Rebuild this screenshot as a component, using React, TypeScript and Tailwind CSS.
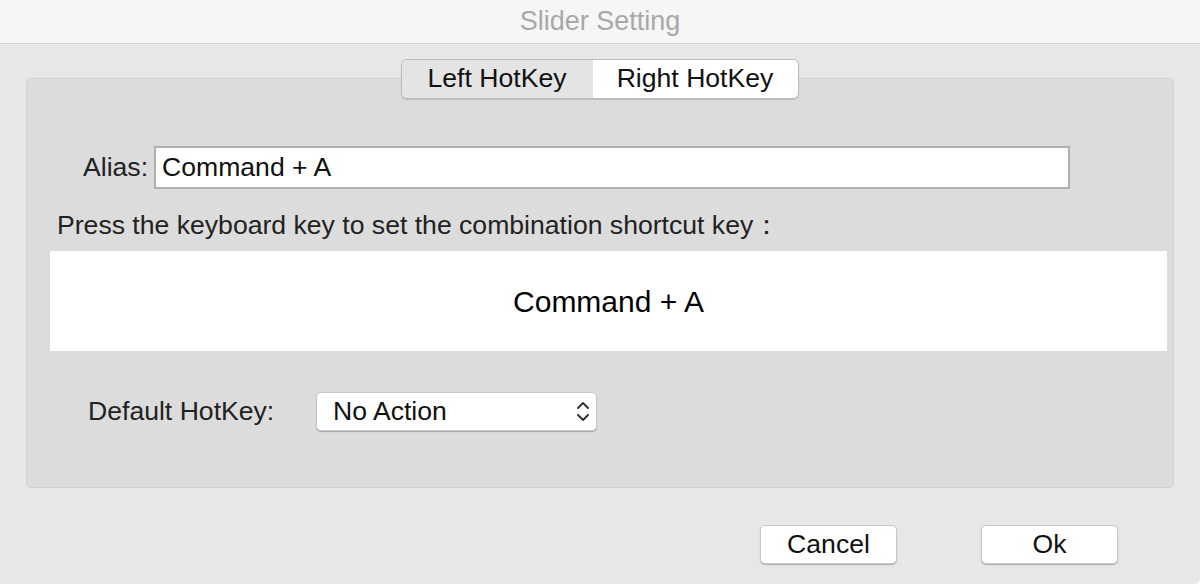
import React from "react";

export default function App() {
  return (
    <div
      className="w-[1200px] h-[584px] bg-[#e7e7e7] flex flex-col overflow-hidden rounded-br-[6px]"
      style={{ fontFamily: '"Liberation Sans", Arial, sans-serif' }}
    >
      <div className="h-[44px] shrink-0 bg-[#f6f6f6] border-b border-[#d3d3d3] flex items-center justify-center">
        <span className="text-[27px] text-[#a8a8a8]">Slider Setting</span>
      </div>
      <div className="relative px-[26px] pt-[34px]">
        <div className="h-[410px] bg-[#dcdcdc] border border-[#d2d2d2] rounded-[5px] flex flex-col pt-[67px] pl-[23px] pr-[6px]">
          <div className="flex items-center pl-[33px] pr-[97px]">
            <span className="text-[26.6px] text-[#222] mr-[6px]">Alias:</span>
            <div className="flex-1 h-[43px] bg-white border-2 border-[#b0b0b0] flex items-center px-[6px]">
              <span className="text-[26.6px] text-[#111]">Command + A</span>
            </div>
          </div>
          <div className="mt-[20px] pl-[7px] text-[26.6px] text-[#222] leading-[32px]">
            Press the keyboard key to set the combination shortcut key：
          </div>
          <div className="mt-[10px] h-[100px] bg-white flex items-center justify-center">
            <span className="text-[30px] text-black">Command + A</span>
          </div>
          <div className="mt-[41px] flex items-center pl-[38px]">
            <span className="text-[26.6px] text-[#222] w-[228px]">Default HotKey:</span>
            <div className="w-[281px] h-[39px] bg-white rounded-[5px] border border-[#c8c8c8] shadow-[0_1px_1px_rgba(0,0,0,0.25)] flex items-center justify-between pl-[16px] pr-[6px]">
              <span className="text-[26.6px] text-[#111]">No Action</span>
              <svg width="14" height="24" viewBox="0 0 14 24" fill="none" stroke="#333" strokeWidth="2" strokeLinecap="round" strokeLinejoin="round">
                <path d="M2 8 L7 3 L12 8" />
                <path d="M2 15 L7 20 L12 15" />
              </svg>
            </div>
          </div>
        </div>
        <div className="absolute top-[15px] left-0 right-0 flex justify-center">
          <div className="flex h-[40px] rounded-[6px] border border-[#b9b9b9] overflow-hidden shadow-[0_1px_1px_rgba(0,0,0,0.15)] ml-[-1px]">
            <div className="w-[191px] bg-[#e4e4e4] flex items-center justify-center text-[26.6px] text-[#111]">Left HotKey</div>
            <div className="w-[205px] bg-white flex items-center justify-center text-[26.6px] text-[#111]">Right HotKey</div>
          </div>
        </div>
      </div>
      <div className="flex justify-end gap-[84px] pr-[82px] pt-[37px]">
        <div className="w-[137px] h-[39px] bg-white rounded-[5px] border border-[#c8c8c8] shadow-[0_1px_1px_rgba(0,0,0,0.25)] flex items-center justify-center text-[26.6px] text-[#111]">Cancel</div>
        <div className="w-[137px] h-[39px] bg-white rounded-[5px] border border-[#c8c8c8] shadow-[0_1px_1px_rgba(0,0,0,0.25)] flex items-center justify-center text-[26.6px] text-[#111]">Ok</div>
      </div>
    </div>
  );
}
